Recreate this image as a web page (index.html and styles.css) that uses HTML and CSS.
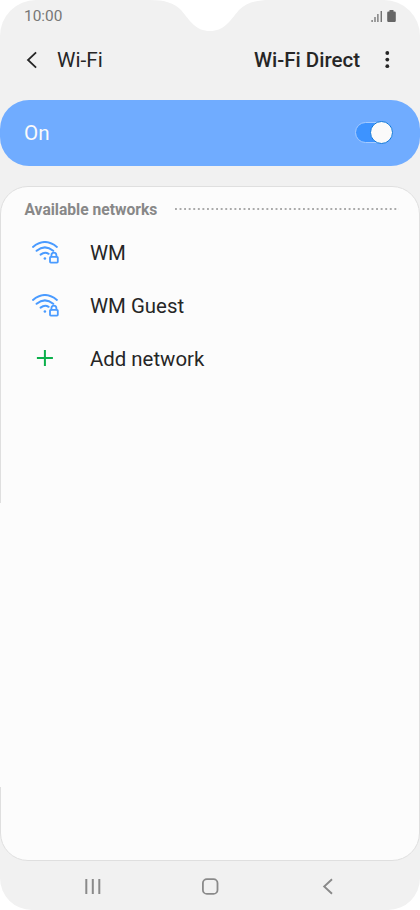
FILE: index.html
```html
<!DOCTYPE html>
<html lang="en">
<head>
<meta charset="utf-8">
<title>Wi-Fi</title>
<link rel="stylesheet" href="styles.css">
</head>
<body>
<div class="screen">
  <svg class="notch" width="120" height="32" viewBox="0 0 120 32"><path d="M0 0C15 0 24 3 31 10C41 22 46 31 60 31C74 31 79 22 89 10C96 3 105 0 120 0Z" fill="#fff"/></svg>
  <header class="status">
    <span class="time">10:00</span>
    <svg width="26" height="14" viewBox="0 0 26 14">
      <g fill="#666"><path d="M.5 11h1.2v2H.5zM3.4 8h1.2v5H3.4zM6.3 5h1.2v8H6.3zM9.6 2h1.3v11H9.6z"/><path d="M18.5 1h4v1.5h1q1.3 0 1.3 1.3v8q0 1.2-1.3 1.2h-6q-1.3 0-1.3-1.2v-8q0-1.3 1.3-1.3h1z"/></g>
    </svg>
  </header>
  <nav class="appbar">
    <svg width="12" height="18" viewBox="0 0 12 18"><path d="M10.1 1.3L2 9l8.1 7.7" fill="none" stroke="#262626" stroke-width="1.8"/></svg>
    <h1 class="title">Wi-Fi</h1>
    <span class="direct">Wi-Fi Direct</span>
    <svg class="more" width="6" height="18" viewBox="0 0 6 18"><g fill="#262626"><circle cx="3.3" cy="2" r="1.9"/><circle cx="3.3" cy="8.6" r="1.9"/><circle cx="3.3" cy="15.2" r="1.9"/></g></svg>
  </nav>
  <section class="power">
    <span class="power-label">On</span>
    <span class="switch"><span class="knob"></span></span>
  </section>
  <main class="networks">
    <div class="heading">
      <h2 class="heading-text">Available networks</h2>
      <svg class="dots" width="224" height="2" viewBox="0 0 224 2"><path d="M0 1h224" stroke="#8f8f8f" stroke-width="1.7" stroke-dasharray="1.9 2.67"/></svg>
    </div>
    <ul class="list">
      <li class="row">
        <svg class="icon" width="28" height="24" viewBox="0 0 28 24"><use href="#wifi"/></svg>
        <span class="wm">WM</span>
      </li>
      <li class="row">
        <svg class="icon" width="28" height="24" viewBox="0 0 28 24">
          <g id="wifi" fill="none" stroke="#4a9bff" stroke-width="2" stroke-linecap="round">
            <path d="M2 5.9Q13.9-3.9 25.9 5.9M5.6 9.8Q13.9 3 22.2 9.8M9.6 13.6Q13.8 10.4 17.6 12.8"/>
            <circle cx="13.9" cy="17.5" r="1.3" fill="#4a9bff" stroke="none"/>
            <path stroke-width="1.8" d="M20.4 15.6v-1.4a2.5 2.6 0 0 1 5 0v1.4"/><rect x="19" y="15.8" width="7.8" height="5.8" rx=".8" stroke-width="1.8"/>
          </g>
        </svg>
        <span class="guest">WM Guest</span>
      </li>
      <li class="row">
        <svg class="icon" width="28" height="24" viewBox="0 0 28 24"><path d="M5.9 11h16M13.9 3v16" stroke="#0bb04b" stroke-width="2" fill="none"/></svg>
        <span class="add">Add network</span>
      </li>
    </ul>
  </main>
  <footer class="navbar">
    <svg width="18" height="18" viewBox="0 0 18 18"><path d="M2.3 1v15M8.8 1v15M15.3 1v15" stroke="#8a8a8a" stroke-width="2"/></svg>
    <svg width="18" height="18" viewBox="0 0 18 18"><rect x=".9" y="1.1" width="14.6" height="14.8" rx="4" fill="none" stroke="#8a8a8a" stroke-width="1.8"/></svg>
    <svg width="18" height="18" viewBox="0 0 18 18"><path d="M13 1.2L5.2 8.5l7.8 7.3" fill="none" stroke="#8a8a8a" stroke-width="1.9"/></svg>
  </footer>
</div>
</body>
</html>
```
FILE: styles.css
```css
* { box-sizing: border-box; }
body { margin: 0; background: #fff; font-family: Roboto, "Liberation Sans", sans-serif; color: #262626; }
svg { display: block; flex: none; }
h1, h2 { margin: 0; }
.screen { position: relative; width: 420px; height: 910px; display: flex; flex-direction: column; background: #f1f1f1; border-radius: 36px 36px 32px 32px; overflow: hidden; }
.notch { position: absolute; left: 150px; top: 0; }
.status { height: 32px; padding: 0 23px 0 24px; display: flex; justify-content: space-between; align-items: center; color: #777; }
.time { font-size: 15.4px; line-height: 18px; }
.appbar { height: 56px; padding: 0 30px 0 26px; display: flex; align-items: center; white-space: nowrap; }
.title { margin-left: 19px; font-size: 20.8px; font-weight: 400; }
.direct { margin-left: auto; font-size: 20.5px; font-weight: 500; }
.more { margin-left: 24px; }
.power { height: 66px; margin-top: 12px; padding: 0 27px 0 24px; display: flex; align-items: center; justify-content: space-between; background: #70acff; border-radius: 29px; }
.power-label { color: #fafafa; font-size: 20.6px; }
.switch { width: 38px; height: 21px; margin-top: -1px; display: flex; align-items: center; justify-content: flex-end; background: #3d93ff; border: 1px solid #a5cbff; border-radius: 11px; }
.knob { width: 23px; height: 23px; flex: none; margin-right: -1px; background: #fafafa; border: 1px solid #0f78da; border-radius: 50%; }
.networks { position: relative; height: 675px; margin-top: 20px; background: #fcfcfc; border: 1px solid #dfdfdf; border-radius: 28px; }
.networks::before { content: ""; position: absolute; left: -1px; top: 316px; width: 1px; height: 284px; background: #fcfcfc; }
.heading { height: 39px; padding: 7px 20px 0 23.5px; display: flex; align-items: center; justify-content: space-between; white-space: nowrap; }
.dots { margin-top: -2px; }
.heading-text { font-size: 15.6px; font-weight: 700; color: #888; }
.list { margin: 0; padding: 0; list-style: none; }
.row { height: 53px; padding-left: 30px; display: flex; align-items: center; gap: 31px; font-size: 20.4px; white-space: nowrap; }
.navbar { height: 49px; padding: 3px 83px 0 84px; display: flex; align-items: center; justify-content: space-between; }
```
